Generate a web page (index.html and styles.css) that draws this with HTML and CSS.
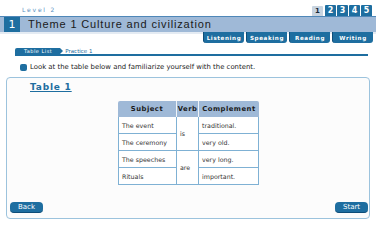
FILE: index.html
```html
<!DOCTYPE html>
<html>
<head>
<meta charset="utf-8">
<link rel="stylesheet" href="styles.css">
</head>
<body>
<div class="page">
  <div class="top">
    <div class="level">Level 2</div>
    <div class="nums">
      <span class="num active">1</span>
      <span class="num">2</span>
      <span class="num">3</span>
      <span class="num">4</span>
      <span class="num">5</span>
    </div>
  </div>
  <div class="titlebar">
    <div class="tnum">1</div>
    <div class="ttext">Theme 1 Culture and civilization</div>
  </div>
  <div class="skills">
    <span class="skill">Listening</span>
    <span class="skill">Speaking</span>
    <span class="skill">Reading</span>
    <span class="skill">Writing</span>
  </div>
  <div class="crumbs">
    <span class="crumb">Table List</span>
    <span class="arrow"></span>
    <span class="crumb2">Practice 1</span>
  </div>
  <div class="instr">
    <span class="bullet"></span>
    <span>Look at the table below and familiarize yourself with the content.</span>
  </div>
  <div class="panel">
    <div class="ptitle">Table 1</div>
    <div class="tablewrap">
      <table class="grammar">
        <thead>
          <tr><th class="c1">Subject</th><th class="c2">Verb</th><th class="c3">Complement</th></tr>
        </thead>
        <tbody>
          <tr><td>The event</td><td rowspan="2" class="verb">is</td><td>traditional.</td></tr>
          <tr><td>The ceremony</td><td>very old.</td></tr>
          <tr><td>The speeches</td><td rowspan="2" class="verb">are</td><td>very long.</td></tr>
          <tr><td>Rituals</td><td>important.</td></tr>
        </tbody>
      </table>
    </div>
    <div class="buttons">
      <span class="btn">Back</span>
      <span class="btn">Start</span>
    </div>
  </div>
</div>
</body>
</html>
```

FILE: styles.css
```css
* { box-sizing: border-box; }
html, body { margin: 0; padding: 0; background: #ffffff; }
body { font-family: "DejaVu Sans", Verdana, sans-serif; color: #222; width: 376px; height: 226px; overflow: hidden; }
.page { width: 376px; }

.top { display: flex; justify-content: space-between; align-items: flex-end; height: 16px; padding: 0 4px 0 22px; }
.level { font-size: 6px; letter-spacing: 1.8px; color: #5a8fbf; padding-bottom: 3px; }
.nums { display: flex; gap: 1px; align-items: flex-end; }
.num { width: 11px; height: 11px; background: #1e6ea0; color: #fff; font-size: 8px; font-weight: bold; display: flex; align-items: center; justify-content: center; border-radius: 1px 1px 0 0; }
.num.active { background: #c8d4e0; color: #1a2a3a; height: 10px; margin-right: 1px; font-size: 7px; }

.titlebar { display: flex; height: 16px; background: #9fb9d7; border-top: 1px solid #4f87b8; padding-left: 4px; }
.tnum { width: 16px; height: 15px; background: #1e6ea0; color: #fff; font-size: 11px; display: flex; align-items: center; justify-content: center; }
.ttext { font-family: "Liberation Sans", Arial, sans-serif; font-size: 11px; letter-spacing: 0.85px; color: #1a1a1a; padding-left: 8px; line-height: 15px; }

.skills { display: flex; justify-content: flex-end; gap: 2px; padding-right: 3px; height: 11px; background: linear-gradient(#e4ebf3 0, #e4ebf3 2px, #ffffff 2px); }
.skill { width: 41px; height: 11px; background: #1e6ea0; color: #fff; font-size: 5.6px; letter-spacing: 0.6px; font-weight: bold; display: flex; align-items: center; justify-content: center; border-radius: 0 0 3px 3px; border-left: 1px solid #0e4d78; }

.crumbs { display: flex; align-items: center; margin: 5px 8px 0 15px; height: 8px; border-bottom: 2px solid #1e6ea0; }
.crumb { background: #1e6ea0; color: #fff; font-size: 5px; letter-spacing: 0.5px; height: 6px; padding: 0 8px 0 9px; display: flex; align-items: center; border-radius: 2px 0 0 0; }
.arrow { width: 0; height: 0; border-top: 3px solid transparent; border-bottom: 3px solid transparent; border-left: 3px solid #1e6ea0; margin-right: 2px; }
.crumb2 { color: #1e6ea0; font-size: 5.5px; line-height: 6px; }

.instr { display: flex; align-items: center; gap: 3px; padding-left: 20px; margin-top: 6px; height: 10px; font-size: 6.9px; color: #222; }
.bullet { width: 7px; height: 7px; background: #1e6ea0; border-radius: 2px; }

.panel { margin: 5px 6px 0 6px; height: 142px; border: 1px solid #9cc3dd; border-radius: 4px; background: #fcfcfc; display: flex; flex-direction: column; }
.ptitle { font-size: 9px; font-weight: bold; color: #1e6ea0; text-decoration: underline; letter-spacing: 0.8px; padding: 4px 0 0 23px; height: 16px; }
.tablewrap { display: flex; padding-left: 111px; margin-top: 7px; }
.grammar { border-collapse: separate; border-spacing: 0; font-size: 6.3px; }
.grammar th { background: #9fb9d7; color: #1a1a1a; font-weight: bold; height: 16px; font-size: 6.8px; letter-spacing: 0.5px; border-right: 1px solid #f0f4f8; padding: 0; }
.grammar th.c1 { width: 59px; border-radius: 2px 0 0 0; }
.grammar th.c2 { width: 22px; }
.grammar th.c3 { width: 60px; border-radius: 0 2px 0 0; border-right: none; }
.grammar td { height: 17px; background: #fff; border-bottom: 1px solid #7fb1d4; border-right: 1px solid #7fb1d4; padding: 0 3px; color: #333; }
.grammar tr td:first-child { border-left: 1px solid #7fb1d4; }
.grammar td.verb { padding-left: 3px; }

.buttons { margin-top: auto; display: flex; justify-content: space-between; padding: 0 1px 5px 3px; }
.btn { width: 33px; height: 11px; background: #1e6ea0; color: #fff; font-size: 7px; display: flex; align-items: center; justify-content: center; border-radius: 4px; border-bottom: 1px solid #0e4d78; }
```
